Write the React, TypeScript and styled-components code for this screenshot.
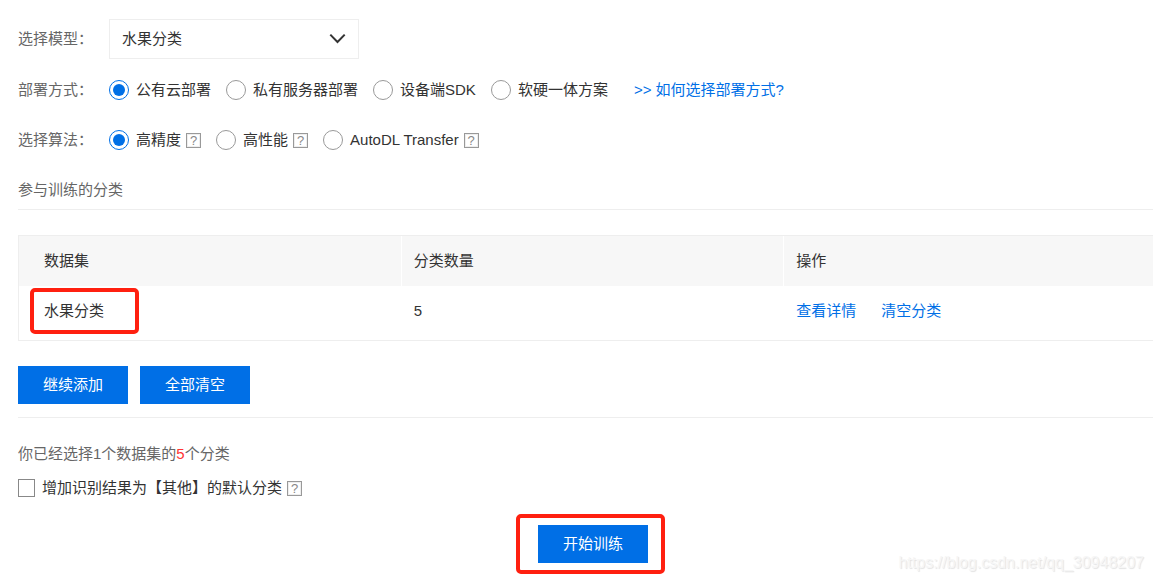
import React, { useState } from 'react';
import styled, { createGlobalStyle } from 'styled-components';

const GlobalStyle = createGlobalStyle`
  * { box-sizing: border-box; }
  body {
    margin: 0;
    background: #fff;
    color: #333;
    font: 15px/20px "Liberation Sans", "Noto Sans CJK SC", sans-serif;
    overflow-x: hidden;
  }
  button, select, input { font: inherit; }
`;

const Page = styled.main`
  position: relative;
  padding: 19px 0 18px 18px;
  overflow: hidden;
`;

/* The training form runs slightly past the right edge of its viewport. */
const Form = styled.form`
  margin-right: -15px;
`;

const Row = styled.div`
  display: flex;
  align-items: center;
  height: 50px;
`;

const ModelRow = styled(Row)`
  height: 40px;
  margin-bottom: 6px;
`;

const Label = styled.label`
  width: 91px;
  color: #666;
`;

const Group = styled.div`
  display: flex;
  align-items: center;
  gap: 15px;
`;

const SelectBox = styled.div`
  position: relative;
  width: 250px;
  height: 40px;
`;

const Select = styled.select`
  appearance: none;
  width: 100%;
  height: 100%;
  padding: 0 40px 0 12px;
  border: 1px solid #eee;
  border-radius: 0;
  background: #fff;
  color: #333;
`;

const Chevron = styled.svg`
  position: absolute;
  top: 14px;
  right: 13px;
  pointer-events: none;
`;

const Choice = styled.label`
  display: flex;
  align-items: center;
  white-space: nowrap;
`;

const Radio = styled.input`
  appearance: none;
  flex: none;
  width: 20px;
  height: 20px;
  margin: 0 7px 0 0;
  border: 1px solid #999;
  border-radius: 50%;
  background: #fff;

  &:checked {
    padding: 3px;
    border-color: #006fe6;
    background: #006fe6 content-box;
  }
`;

const Checkbox = styled.input`
  appearance: none;
  flex: none;
  width: 17px;
  height: 18px;
  margin: 0 7px 0 0;
  border: 1px solid #888;
  background: #fff;

  &:checked {
    padding: 3px;
    background: #006fe6 content-box;
  }
`;

const Help = styled.span`
  display: flex;
  align-items: center;
  justify-content: center;
  width: 15px;
  height: 15px;
  margin-left: 5px;
  border: 1px solid #999;
  box-shadow: inset 0 0 0 1px #eee;
  color: #888;
  font-size: 13px;
  line-height: 13px;
`;

const Link = styled.a<{ $gap?: number }>`
  margin-left: ${(p) => p.$gap ?? 0}px;
  color: #006fe6;
  text-decoration: none;
`;

const SectionTitle = styled.h2`
  height: 45px;
  margin: 0 0 25px;
  padding-top: 15px;
  border-bottom: 1px solid #eee;
  color: #666;
  font-size: 15px;
  font-weight: 400;
`;

const Table = styled.table`
  width: 100%;
  table-layout: fixed;
  border: 1px solid #eee;
  border-collapse: separate;
  border-spacing: 0;
  text-align: left;
`;

const HeadCell = styled.th`
  height: 50px;
  padding: 0 12px;
  border-right: 1px solid #fff;
  background: #f7f7f7;
  font-weight: 400;

  &:first-child { padding-left: 25px; }
`;

const Cell = styled.td`
  position: relative;
  height: 54px;
  padding: 0 12px 4px;

  &:first-child { padding-left: 25px; }
`;

const Marker = styled.span<{ $wide?: boolean }>`
  position: absolute;
  top: ${(p) => (p.$wide ? -11 : 2)}px;
  left: ${(p) => (p.$wide ? -22 : 11)}px;
  width: ${(p) => (p.$wide ? 149 : 109)}px;
  height: ${(p) => (p.$wide ? 60 : 46)}px;
  border: 4px solid #ff2010;
  border-radius: 5px;
  pointer-events: none;
`;

const Actions = styled.div`
  display: flex;
  gap: 12px;
  padding: 25px 0 13px;
  border-bottom: 1px solid #eee;
`;

const Button = styled.button`
  width: 110px;
  height: 38px;
  padding: 0;
  border: 0;
  background: #006fe6;
  color: #fff;
`;

const Summary = styled.p`
  margin: 26px 0 14px;
  color: #666;
`;

const Count = styled.span`
  color: #f33;
`;

const Submit = styled.div`
  position: relative;
  width: 110px;
  height: 38px;
  margin: 27px auto 0;
`;

const Watermark = styled.span`
  position: absolute;
  right: 9px;
  bottom: 8px;
  color: #f6f6f6;
  font-size: 16px;
  text-shadow: 1px 1px 1px #e2e2e2;
`;

const deployments = ['公有云部署', '私有服务器部署', '设备端SDK', '软硬一体方案'];
const algorithms = ['高精度', '高性能', 'AutoDL Transfer'];

type RadioGroupProps = {
  name: string;
  options: string[];
  help?: boolean;
  children?: React.ReactNode;
};

function RadioGroup({ name, options, help, children }: RadioGroupProps) {
  const [selected, setSelected] = useState(options[0]);
  return (
    <Group role="radiogroup" aria-labelledby={`${name}-label`}>
      {options.map((option) => (
        <Choice key={option}>
          <Radio
            type="radio"
            name={name}
            checked={selected === option}
            onChange={() => setSelected(option)}
          />
          {option}
          {help && <Help>?</Help>}
        </Choice>
      ))}
      {children}
    </Group>
  );
}

export default function App() {
  return (
    <>
      <GlobalStyle />
      <Page>
        <Form onSubmit={(e) => e.preventDefault()}>
          <ModelRow>
            <Label htmlFor="model">选择模型：</Label>
            <SelectBox>
              <Select id="model">
                <option>水果分类</option>
              </Select>
              <Chevron width="17" height="12" viewBox="0 0 17 12" fill="none" aria-hidden="true">
                <path d="M1.3 1.6 8.5 9l7.2-7.4" stroke="#333" strokeWidth="2" />
              </Chevron>
            </SelectBox>
          </ModelRow>
          <Row>
            <Label as="span" id="deployment-label">部署方式：</Label>
            <RadioGroup name="deployment" options={deployments}>
              <Link href="#deployment-guide" $gap={11}>
                &gt;&gt; 如何选择部署方式?
              </Link>
            </RadioGroup>
          </Row>
          <Row>
            <Label as="span" id="algorithm-label">选择算法：</Label>
            <RadioGroup name="algorithm" options={algorithms} help />
          </Row>
          <SectionTitle>参与训练的分类</SectionTitle>
          <Table>
            <thead>
              <tr>
                <HeadCell scope="col">数据集</HeadCell>
                <HeadCell scope="col">分类数量</HeadCell>
                <HeadCell scope="col">操作</HeadCell>
              </tr>
            </thead>
            <tbody>
              <tr>
                <Cell>
                  水果分类
                  <Marker />
                </Cell>
                <Cell>5</Cell>
                <Cell>
                  <Link href="#details">查看详情</Link>
                  <Link href="#clear" $gap={25}>清空分类</Link>
                </Cell>
              </tr>
            </tbody>
          </Table>
          <Actions>
            <Button type="button">继续添加</Button>
            <Button type="button">全部清空</Button>
          </Actions>
          <Summary>
            你已经选择1个数据集的<Count>5</Count>个分类
          </Summary>
          <Choice>
            <Checkbox type="checkbox" />
            增加识别结果为【其他】的默认分类
            <Help>?</Help>
          </Choice>
          <Submit>
            <Button type="submit">开始训练</Button>
            <Marker $wide />
          </Submit>
        </Form>
        <Watermark>https://blog.csdn.net/qq_30948207</Watermark>
      </Page>
    </>
  );
}
